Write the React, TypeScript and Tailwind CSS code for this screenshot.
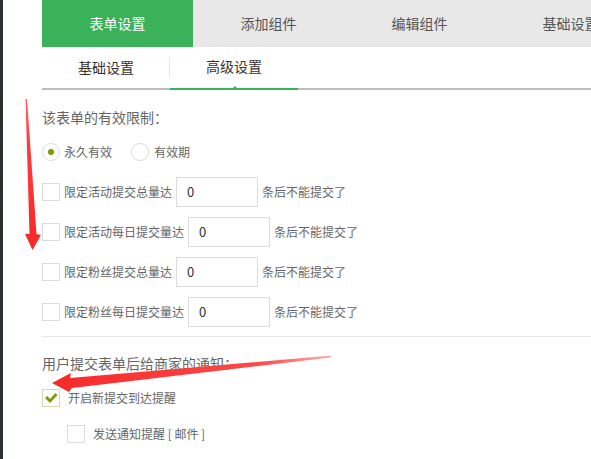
import React from "react";

const font = { fontFamily: '"Noto Sans CJK SC", "Microsoft YaHei", sans-serif' };

function Box({ className = "" }: { className?: string }) {
  return <span className={`block w-[18px] h-[18px] border border-[#dcdcdc] bg-white shrink-0 ${className}`} />;
}

function LimitRow({ label }: { label: string }) {
  return (
    <div className="flex items-center h-[30px]">
      <Box />
      <span className="ml-[4px] text-[12px] text-[#666] leading-[30px] whitespace-nowrap">{label}</span>
      <div className="ml-[4px] w-[82px] h-[30px] border border-[#dcdcdc] flex items-center pl-[10px] text-[13px] text-[#333]">0</div>
      <span className="ml-[4px] text-[12px] text-[#666] whitespace-nowrap">条后不能提交了</span>
    </div>
  );
}

export default function App() {
  return (
    <div className="relative w-[591px] h-[459px] overflow-hidden bg-white flex" style={font}>
      <div className="w-[3px] shrink-0 bg-[#2c3037]" />
      <div className="flex-1 pl-[39px] min-w-0">
        {/* top tabs */}
        <div className="flex h-[47px] bg-[#e8e8e8] w-[700px]">
          <div className="w-[151px] shrink-0 bg-[#3bb15a] text-white text-[14px] flex items-center justify-center">表单设置</div>
          <div className="w-[151px] shrink-0 text-[#555] text-[14px] flex items-center justify-center">添加组件</div>
          <div className="w-[151px] shrink-0 text-[#555] text-[14px] flex items-center justify-center">编辑组件</div>
          <div className="w-[151px] shrink-0 text-[#555] text-[14px] flex items-center justify-center">基础设置</div>
        </div>
        {/* sub tabs */}
        <div className="flex h-[43px] border-b-2 border-[#bdbdbd]">
          <div className="w-[128px] h-[41px] flex items-center justify-center text-[14px] text-[#333] relative">
            基础设置
            <span className="absolute right-0 top-[10px] h-[20px] w-px bg-[#e6e6e6]" />
          </div>
          <div className="relative w-[128px] h-[43px] -mb-[2px] border-b-2 border-[#3bb15a] flex items-center justify-center text-[14px] text-[#333] pb-[2px]">
            高级设置
            <span className="absolute left-[63px] bottom-0 w-0 h-0 border-l-[2px] border-r-[2px] border-b-[2px] border-l-transparent border-r-transparent border-b-[#3bb15a]" />
          </div>
        </div>
        {/* content */}
        <div className="mt-[17px] h-[20px] leading-[20px] text-[14px] text-[#666]">该表单的有效限制：</div>
        <div className="mt-[15px] flex items-center h-[20px]">
          <span className="w-[18px] h-[18px] rounded-full border border-[#dcdcdc] flex items-center justify-center shrink-0">
            <span className="w-[6px] h-[6px] rounded-full bg-[#7b9b00]" />
          </span>
          <span className="ml-[4px] text-[12px] text-[#666]">永久有效</span>
          <span className="ml-[19px] w-[18px] h-[18px] rounded-full border border-[#dcdcdc] shrink-0" />
          <span className="ml-[5px] text-[12px] text-[#666]">有效期</span>
        </div>
        <div className="mt-[15px] flex flex-col gap-[10px]">
          <LimitRow label="限定活动提交总量达" />
          <LimitRow label="限定活动每日提交量达" />
          <LimitRow label="限定粉丝提交总量达" />
          <LimitRow label="限定粉丝每日提交量达" />
        </div>
        <div className="mt-[9px] h-px bg-[#e6e6e6]" />
        <div className="mt-[16px] h-[20px] leading-[20px] text-[14px] text-[#666]">用户提交表单后给商家的通知：</div>
        <div className="mt-[15px] flex items-center h-[20px]">
          <span className="w-[18px] h-[18px] border border-[#cfdcb0] bg-white shrink-0 flex items-center justify-center">
            <svg width="14" height="12" viewBox="0 0 14 12">
              <path d="M1 6 L3.5 4 L6 7 L11.5 1 L13.5 3 L6 11 Z" fill="#7b9b00" />
            </svg>
          </span>
          <span className="ml-[8px] text-[12px] text-[#666]">开启新提交到达提醒</span>
        </div>
        <div className="mt-[16px] ml-[25px] flex items-center h-[20px]">
          <Box />
          <span className="ml-[8px] text-[12px] text-[#666]">发送通知提醒 [ 邮件 ]</span>
        </div>
      </div>
      {/* annotation arrows */}
      <svg className="absolute left-0 top-0 pointer-events-none" width="591" height="459" viewBox="0 0 591 459">
        <defs>
          <linearGradient id="g1" x1="0" y1="0" x2="0" y2="1">
            <stop offset="0" stopColor="#ff6666" />
            <stop offset="0.3" stopColor="#ff3a3a" />
            <stop offset="1" stopColor="#f52a2a" />
          </linearGradient>
          <linearGradient id="g2" x1="1" y1="0" x2="0" y2="0">
            <stop offset="0" stopColor="#ffb0b0" />
            <stop offset="0.25" stopColor="#ff4848" />
            <stop offset="1" stopColor="#f52a2a" />
          </linearGradient>
        </defs>
        <polygon points="25.5,99 27,99 36.5,234 41,235 32.5,250 25,234 29.5,234" fill="url(#g1)" />
        <polygon points="52,383 71,373 70,378 331,355.5 331,357.5 72,388 69,392" fill="url(#g2)" />
      </svg>
    </div>
  );
}
